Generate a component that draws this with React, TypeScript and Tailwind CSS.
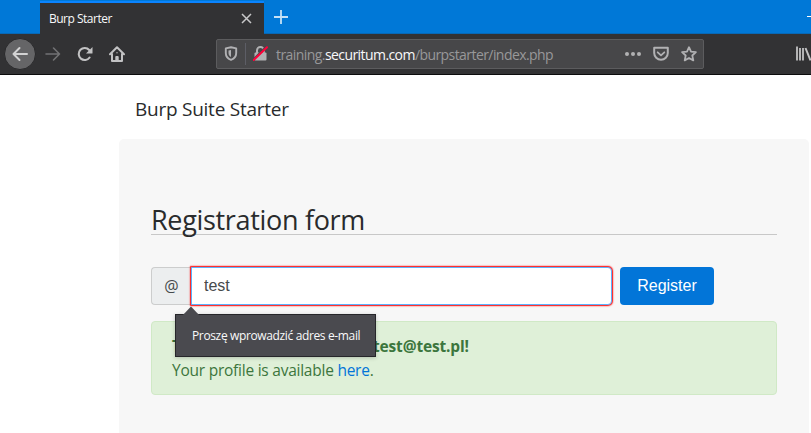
import React from "react";

function BackIcon() {
  return (
    <svg className="h-4 w-4" viewBox="0 0 16 16" fill="none" stroke="currentColor" strokeWidth="2" strokeLinecap="round" strokeLinejoin="round">
      <path d="M15 8H1.5M7.5 2 1.5 8l6 6" />
    </svg>
  );
}

function ForwardIcon() {
  return (
    <svg className="h-4 w-4" viewBox="0 0 16 16" fill="none" stroke="currentColor" strokeWidth="1.6" strokeLinecap="round" strokeLinejoin="round">
      <path d="M1 8h13.5M8.500 2l6 6-6 6" />
    </svg>
  );
}

function ReloadIcon() {
  return (
    <svg className="h-4 w-4" viewBox="0 0 16 16" fill="none">
      <path d="M12.2 4A6 6 0 1 0 12.6 11.500" stroke="currentColor" strokeWidth="2.1" strokeLinecap="round" />
      <path d="M15.5 1v6a.6.6 0 0 1-.6.6H9z" fill="currentColor" />
    </svg>
  );
}

function HomeIcon() {
  return (
    <svg className="h-4 w-4" viewBox="0 0 16 16" fill="none" stroke="currentColor" strokeWidth="2" strokeLinecap="round" strokeLinejoin="round">
      <path d="M1 8.2 8 1.2l7 7M3 8v7h10V8" />
      <path d="M7.2 15v-4h1.6v4" strokeWidth="1.8" />
      <path d="M8 6.7v.1" strokeWidth="1.3" />
    </svg>
  );
}

function ShieldIcon() {
  return (
    <svg className="h-[15px] w-[14px]" viewBox="0 0 14 15" fill="none">
      <path d="M7 1.2 12.2 2.4V7c0 3.2-2 5.6-5.2 6.8C3.8 12.6 1.8 10.2 1.8 7V2.4z" stroke="currentColor" strokeWidth="1.9" strokeLinejoin="round" />
      <path d="M7 4v7C5.3 10 4.5 8.7 4.5 7V4.6z" fill="currentColor" />
    </svg>
  );
}

function InsecureIcon() {
  return (
    <svg className="h-[15px] w-[15px]" viewBox="0 0 15 15" fill="none">
      <path d="M4 7V4.4a3.4 3.4 0 0 1 6.8 0V7" stroke="#b1b1b3" strokeWidth="2" />
      <rect x="1.5" y="6.5" width="12" height="8" rx="1" fill="#b1b1b3" />
      <path d="M.2 13.3 12.8.7" stroke="#474749" strokeWidth="1.5" />
      <path d="M.7 14 14 1.3" stroke="#ff0039" strokeWidth="2" strokeLinecap="round" />
    </svg>
  );
}

function PocketIcon() {
  return (
    <svg className="h-4 w-4" viewBox="0 0 16 16" fill="none" stroke="currentColor" strokeWidth="2" strokeLinecap="round" strokeLinejoin="round">
      <path d="M1.2 1.8h13.6V7a6.8 6.8 0 0 1-13.6 0z" />
      <path d="m4.7 6.3 3.3 3 3.3-3" strokeWidth="1.8" />
    </svg>
  );
}

function StarIcon() {
  return (
    <svg className="h-4 w-4" viewBox="0 0 16 16" fill="none" stroke="currentColor" strokeWidth="1.8" strokeLinejoin="round">
      <path d="m8 1.2 2 4.5 4.9.5-3.6 3.3 1 4.9L8 12l-4.3 2.4 1-4.9L1.1 6.2 6 5.7z" />
    </svg>
  );
}

function TabStrip() {
  return (
    <div className="flex h-[34px] items-stretch bg-[#0078d7]">
      <div className="w-10 shrink-0 border-b border-[#0868b5]" />
      <div className="mt-px flex w-[224px] items-center border-t-2 border-[#0a84ff] bg-[#323234] pl-[9px] pr-3 text-[#f9f9fa]">
        <span className="text-[12px] leading-4 tracking-[-0.5px] whitespace-nowrap">Burp Starter</span>
        <svg className="ml-auto h-[11px] w-[11px]" viewBox="0 0 11 11" fill="none" stroke="#c8c8c9" strokeWidth="1.5">
          <path d="m1 1 9 9M10 1l-9 9" />
        </svg>
      </div>
      <div className="flex grow border-b border-[#0868b5] pl-[10px] pt-[10px]">
        <svg className="h-[14px] w-[14px]" viewBox="0 0 14 14" stroke="#c5e1f6" strokeWidth="1.8">
          <path d="M7 0v14M0 7h14" />
        </svg>
        <span className="ml-auto mt-[6px] h-px w-1 bg-white" />
      </div>
    </div>
  );
}

function Toolbar() {
  return (
    <div className="flex h-[41px] items-center border-b border-[#0c0c0d] bg-[#323234] pb-px text-[#c2c2c3]">
      <div className="ml-1 flex h-8 w-8 shrink-0 items-center justify-center rounded-full border border-[#29292b] bg-[#656567] text-[#d3d3d4]"><BackIcon /></div>
      <div className="ml-[9px] text-[#727274]"><ForwardIcon /></div>
      <div className="ml-4"><ReloadIcon /></div>
      <div className="ml-4"><HomeIcon /></div>
      <div className="ml-[91px] flex h-[30px] w-[488px] shrink-0 items-center rounded-[2px] border border-[#5c5c5e] bg-[#474749] text-[#b1b1b3]">
        <div className="ml-[7px]"><ShieldIcon /></div>
        <span className="ml-[7px] h-[22px] w-px bg-[#5d5e66]" />
        <div className="ml-[7px]"><InsecureIcon /></div>
        <span className="ml-[8px] mt-[2px] text-[14px] leading-5 tracking-[-0.57px] whitespace-nowrap text-[#98989a]">
          training.<span className="text-[#f9f9fa]">securitum.com</span>/burpstarter/index.php
        </span>
        <div className="ml-auto flex gap-[2px]">
          <span className="h-1 w-1 rounded-full bg-current" />
          <span className="h-1 w-1 rounded-full bg-current" />
          <span className="h-1 w-1 rounded-full bg-current" />
        </div>
        <div className="ml-3"><PocketIcon /></div>
        <div className="ml-3 mr-[6px]"><StarIcon /></div>
      </div>
      <svg className="ml-auto h-[15px] w-[15px] shrink-0" viewBox="0 0 15 15" fill="none" stroke="currentColor" strokeWidth="2">
        <path d="M1 .5v14M4 2v12.5M7 2v12.5" strokeWidth="1.8" />
        <path d="m9.5 2 5 12.5" />
      </svg>
    </div>
  );
}

function ValidationTip() {
  return (
    <div className="absolute left-6 top-[47px] z-10 flex h-[43px] w-[201px] items-center border border-[#26262a] bg-[#4a4a4f] pl-4 text-[#f9f9fa] shadow-[0_1px_4px_rgba(0,0,0,0.2)]">
      <svg className="absolute -top-[9px] left-[6px] h-[10px] w-[18px]" viewBox="0 0 18 10">
        <path d="m0 10 9-9.5 9 9.5z" fill="#4a4a4f" />
      </svg>
      <span className="text-[12px] leading-4 tracking-[-0.36px] whitespace-nowrap">Proszę wprowadzić adres e-mail</span>
    </div>
  );
}

export default function App() {
  return (
    <div className="h-[433px] w-[811px] overflow-hidden bg-white font-['Open_Sans','Noto_Sans',sans-serif] text-[#292b2c]">
      <TabStrip />
      <Toolbar />
      <main className="ml-[119px] mr-[2px]">
        <h3 className="h-16 pl-4 pt-5 text-[19px] leading-7 tracking-[-0.25px]">Burp Suite Starter</h3>
        <section className="h-[294px] rounded-t-[5px] bg-[#f7f7f7] px-8 pt-[62px]">
          <h1 className="h-[34px] border-b border-[#c8c8c8] text-[27px] leading-[38px] tracking-[-0.32px]">Registration form</h1>
          <form className="relative mt-8 flex h-[38px] font-['Liberation_Sans',Arial,sans-serif]" onSubmit={(e) => e.preventDefault()}>
            <span className="flex w-10 items-center justify-center rounded-l border border-r-0 border-[#cccdcd] bg-[#eceeef] font-['Open_Sans',sans-serif] text-[16px] text-[#464a4c]">@</span>
            <input
              className="w-[421px] rounded-r border border-[#5cb3fd] bg-white px-3 text-base text-[#464a4c] shadow-[0_0_1.5px_1px_#ff0000] outline-none"
              defaultValue="test"
            />
            <button className="ml-2 w-[94px] rounded bg-[#0275d8] text-base text-white">Register</button>
            <div className="font-['Open_Sans','Noto_Sans',sans-serif]"><ValidationTip /></div>
          </form>
          <div className="mt-4 h-[74px] rounded border border-[#d0e9c6] bg-[#dff0d8] pl-5 pt-3 text-[15.5px] leading-6 text-[#3c763d]">
            <p className="flex whitespace-nowrap font-bold tracking-[-0.16px]">
              <span className="w-[201px]">T</span>
              <span>test@test.pl!</span>
            </p>
            <p className="whitespace-nowrap tracking-[-0.24px]">Your profile is available <a className="text-[#0275d8]">here</a>.</p>
          </div>
        </section>
      </main>
    </div>
  );
}
